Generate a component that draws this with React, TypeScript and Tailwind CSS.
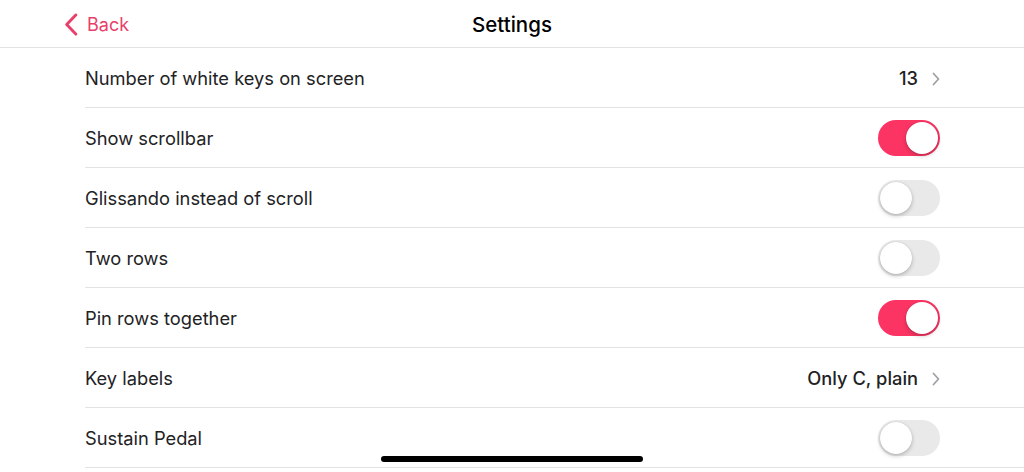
import { useState } from "react";

type Row =
  | { label: string; kind: "value"; value: string }
  | { label: string; kind: "toggle"; on: boolean };

const rows: Row[] = [
  { label: "Number of white keys on screen", kind: "value", value: "13" },
  { label: "Show scrollbar", kind: "toggle", on: true },
  { label: "Glissando instead of scroll", kind: "toggle", on: false },
  { label: "Two rows", kind: "toggle", on: false },
  { label: "Pin rows together", kind: "toggle", on: true },
  { label: "Key labels", kind: "value", value: "Only C, plain" },
  { label: "Sustain Pedal", kind: "toggle", on: false },
];

function Toggle({ initial }: { initial: boolean }) {
  const [on, setOn] = useState(initial);
  return (
    <button
      onClick={() => setOn(!on)}
      className={`flex h-[36px] w-[62px] items-center rounded-full p-[2px] ${
        on ? "justify-end bg-[#fb3463]" : "justify-start bg-[#e9e9ea]"
      }`}
    >
      <span className="h-[32px] w-[32px] rounded-full bg-white shadow-[0_2px_4px_rgba(0,0,0,0.22),0_0_1px_rgba(0,0,0,0.2)]" />
    </button>
  );
}

function Chevron({ className }: { className?: string }) {
  return (
    <svg viewBox="0 0 8 14" className={className} fill="none">
      <path d="M1.5 1.5 L6.5 7 L1.5 12.5" stroke="currentColor" strokeWidth="1.8" strokeLinecap="round" strokeLinejoin="round" />
    </svg>
  );
}

export default function App() {
  return (
    <div className="relative h-[472px] w-[1024px] overflow-hidden bg-white font-['Inter',sans-serif] text-[#222224]">
      {/* Nav bar */}
      <div className="relative flex h-[48px] items-center border-b border-[#e3e3e5] pl-[64px] pt-[2px]">
        <button className="flex items-center gap-[9px] text-[#e8406a]">
          <svg viewBox="0 0 14 24" className="h-[23px] w-[14px]" fill="none">
            <path d="M12 2 L2.5 12 L12 22" stroke="currentColor" strokeWidth="3" strokeLinecap="round" strokeLinejoin="round" />
          </svg>
          <span className="text-[18px]">Back</span>
        </button>
        <div className="pointer-events-none absolute inset-x-0 top-0 flex h-[47px] items-center justify-center pt-[3px]">
          <span className="text-[20.5px] font-medium text-black">Settings</span>
        </div>
      </div>

      {/* Rows */}
      <div className="pl-[85px]">
        {rows.map((r) => (
          <div key={r.label} className="flex h-[60px] items-center justify-between border-b border-[#e3e3e5] pr-[84px]">
            <span className="pt-[2px] text-[18.3px]">{r.label}</span>
            {r.kind === "toggle" ? (
              <Toggle initial={r.on} />
            ) : (
              <div className="flex items-center gap-[14px] pt-[2px]">
                <span className="text-[18.3px] font-medium">{r.value}</span>
                <Chevron className="h-[14px] w-[8px] text-[#a1a1a6]" />
              </div>
            )}
          </div>
        ))}
      </div>

      {/* Home indicator */}
      <div className="absolute bottom-[10px] left-[381px] h-[6px] w-[262px] rounded-full bg-black" />
    </div>
  );
}
